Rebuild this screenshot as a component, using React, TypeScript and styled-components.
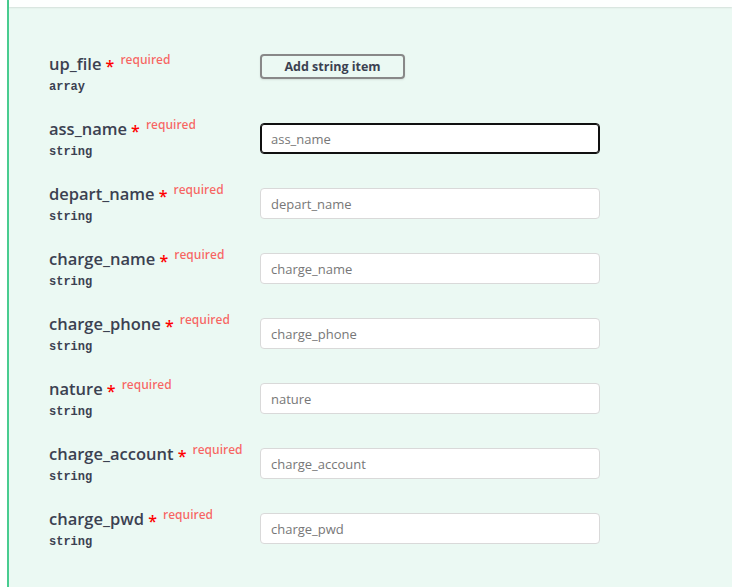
import React from "react";
import styled, { createGlobalStyle } from "styled-components";

const Global = createGlobalStyle`
  html, body { margin: 0; padding: 0; background: #ffffff; }
  body { font-family: "Open Sans", "Noto Sans", sans-serif; color: #3b4151; }
  #root { height: 587px; overflow: hidden; }
`;

const Block = styled.div`
  margin-left: 7px;
  height: 587px;
  border-left: 2px solid #49cc90;
  background: #ebf9f3;
  display: flex;
  flex-direction: column;
`;

const SectionHeader = styled.div`
  height: 7px;
  background: rgba(255, 255, 255, 0.9);
  box-shadow: 0 1px 2px rgba(0, 0, 0, 0.1);
`;

const Params = styled.div`
  padding: 47px 0 0 40px;
  display: flex;
  flex-direction: column;
`;

const Row = styled.div`
  display: grid;
  grid-template-columns: 211px 340px;
  height: 65px;
  align-items: start;
`;

const NameCol = styled.div`
  display: flex;
  flex-direction: column;
`;

const Name = styled.div`
  font-size: 16.5px;
  font-weight: 600;
  line-height: 20px;
  height: 20px;
  white-space: nowrap;
  color: #3b4151;
`;

const Star = styled.span`
  color: red;
  font-size: 16px;
  position: relative;
  top: 2px;
`;

const Req = styled.span`
  color: rgba(255, 0, 0, 0.6);
  font-size: 12px;
  padding: 5px 5px 5px 6px;
  position: relative;
  top: -6px;
`;

const Type = styled.div`
  font-family: "Liberation Mono", monospace;
  font-size: 12px;
  font-weight: 700;
  line-height: 14px;
  padding: 6px 0 4px;
  color: #3b4151;
`;

const Button = styled.button`
  margin-top: -1px;
  width: 145px;
  height: 25px;
  box-sizing: border-box;
  border: 2px solid #888888;
  border-radius: 4px;
  background: transparent;
  box-shadow: 0 1px 2px rgba(0, 0, 0, 0.1);
  font-family: "Open Sans", "Noto Sans", sans-serif;
  font-size: 12.5px;
  font-weight: 700;
  color: #3b4151;
  padding: 0;
  cursor: pointer;
`;

const Input = styled.input<{ $focused?: boolean }>`
  margin-top: 4px;
  width: 340px;
  height: 31px;
  box-sizing: border-box;
  padding: 0 10px;
  border-radius: 4px;
  background: #ffffff;
  font-family: "Open Sans", "Noto Sans", sans-serif;
  font-size: 13px;
  color: #3b4151;
  outline: none;
  border: 1px solid ${(p) => (p.$focused ? "#101010" : "#d9d9d9")};
  box-shadow: ${(p) => (p.$focused ? "inset 0 0 0 1px #101010" : "none")};
  &::placeholder { color: #777777; }
`;

type Param = { name: string; type: string; kind: "array" | "input"; focused?: boolean };

const params: Param[] = [
  { name: "up_file", type: "array", kind: "array" },
  { name: "ass_name", type: "string", kind: "input", focused: true },
  { name: "depart_name", type: "string", kind: "input" },
  { name: "charge_name", type: "string", kind: "input" },
  { name: "charge_phone", type: "string", kind: "input" },
  { name: "nature", type: "string", kind: "input" },
  { name: "charge_account", type: "string", kind: "input" },
  { name: "charge_pwd", type: "string", kind: "input" },
];

export default function App() {
  return (
    <>
      <Global />
      <Block>
        <SectionHeader />
        <Params>
          {params.map((p) => (
            <Row key={p.name}>
              <NameCol>
                <Name>
                  {p.name}
                  <Star>{"\u00a0*"}</Star>
                  <Req>required</Req>
                </Name>
                <Type>{p.type}</Type>
              </NameCol>
              <div>
                {p.kind === "array" ? (
                  <Button type="button">Add string item</Button>
                ) : (
                  <Input placeholder={p.name} $focused={p.focused} readOnly />
                )}
              </div>
            </Row>
          ))}
        </Params>
      </Block>
    </>
  );
}
